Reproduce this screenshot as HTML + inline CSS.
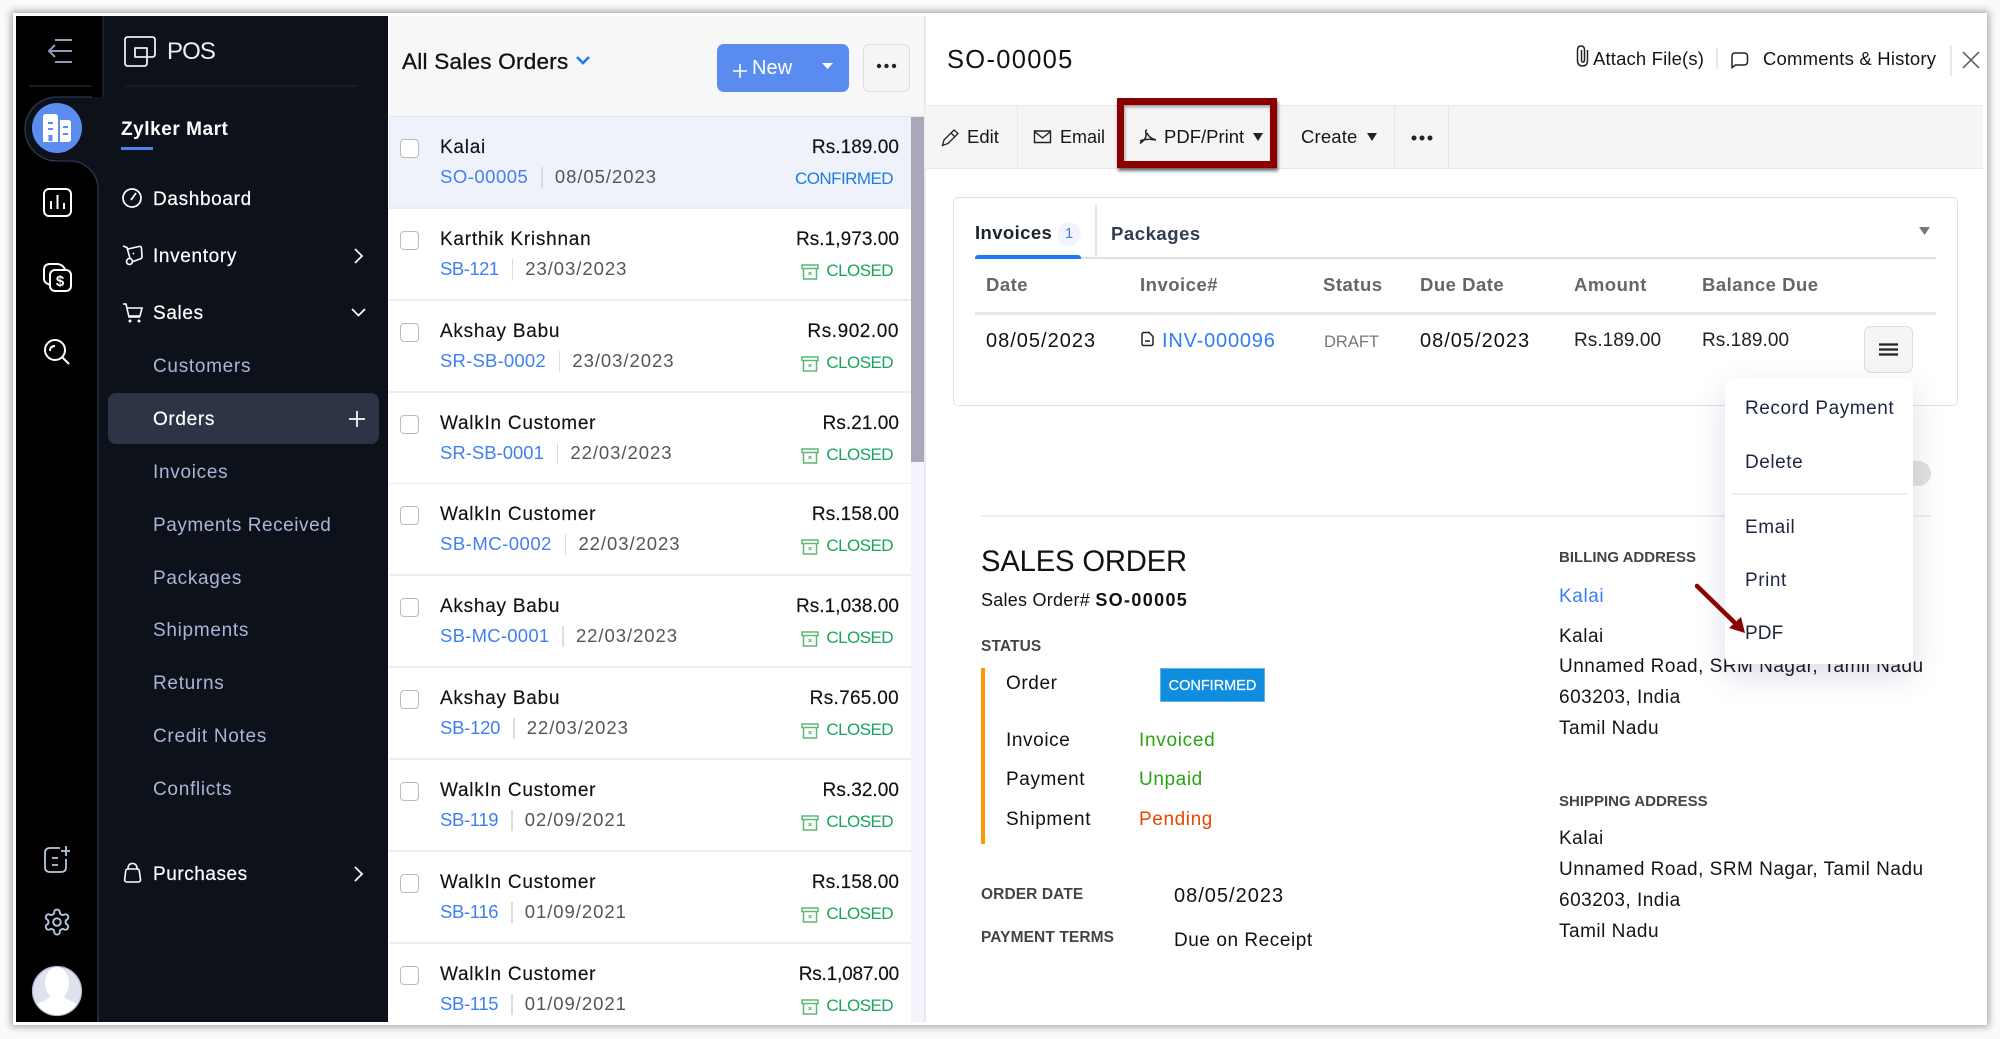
<!DOCTYPE html>
<html lang="en"><head><meta charset="utf-8"><title>Sales Orders</title>
<style>
*{box-sizing:border-box}
html,body{margin:0;padding:0;width:2000px;height:1039px;overflow:hidden;background:#fafafa;font-family:"Liberation Sans",Arial,sans-serif;color:#111}
.a,.t{position:absolute}
.t{white-space:nowrap;height:24px;line-height:24px;font-size:19px;letter-spacing:.6px}
.b{font-weight:700}
#frame{left:13px;top:13px;width:1974px;height:1012px;background:#fff;box-shadow:0 0 7px 2px rgba(0,0,0,.33)}
.nav{color:#fff;letter-spacing:.65px;-webkit-text-stroke:.2px #fff}
.sub{color:#a9b6d6;letter-spacing:.7px}
#list{left:389px;top:117px;width:522px;height:905px;overflow:hidden}
.row{position:absolute;left:0;width:522px;height:92px;border-bottom:2px solid #ecedf3;background:#fff}
.row.sel{background:#f0f2fb}
.cb{position:absolute;left:11px;top:22px;width:19px;height:19px;background:#fff;border:1.5px solid #bbb;border-radius:4px}
.nm{position:absolute;left:51px;top:19px;line-height:24px;font-size:19px;letter-spacing:.75px;white-space:nowrap;-webkit-text-stroke:.15px #111}
.am{position:absolute;right:12px;top:19px;line-height:24px;font-size:19px;white-space:nowrap;letter-spacing:.05px;-webkit-text-stroke:.15px #111}
.sb{position:absolute;left:51px;top:48px;height:24px;display:flex;align-items:center;font-size:18.5px;white-space:nowrap}
.sb u{text-decoration:none;color:#3f7ff5;letter-spacing:.3px}
.sb i{display:block;width:1.5px;height:21px;background:#dcdcdc;margin:0 12px 0 13px}
.sb span{color:#555;letter-spacing:.95px}
.st{position:absolute;right:18px;top:50px;line-height:24px;font-size:17px;white-space:nowrap}
.cf{color:#1c7de0;letter-spacing:-.55px}
.cl{color:#17a45c;letter-spacing:-.55px}
.cl svg{position:absolute;left:-25px;top:5px}
.th{font-weight:700;color:#666;font-size:18.5px;letter-spacing:.5px}
.tool{color:#161616;font-size:18.5px;letter-spacing:0}
.menu{color:#1f2740;letter-spacing:.55px}
.lab{font-weight:700;color:#444;font-size:15.5px;letter-spacing:.1px}
.la2{font-size:15px;letter-spacing:0}
.adr{letter-spacing:.5px;color:#151515}
.dt{font-size:20px;letter-spacing:1px}
</style></head><body>
<div class="a" id="frame"></div>
<div class="a" style="left:16px;top:16px;width:372px;height:1006px;background:#0d1119"></div>
<div class="a" style="left:16px;top:16px;width:87px;height:81px;background:#000"></div>
<div class="a" style="left:16px;top:97px;width:82px;height:925px;background:#000"></div>

<div class="a" style="left:108px;top:393px;width:271px;height:51px;background:#2c3445;border-radius:8px"></div>

<!-- list header -->
<div class="a" style="left:389px;top:16px;width:536px;height:101px;background:#f7f7f7;border-bottom:1.5px solid #e4e4e4"></div>
<div class="a" style="left:717px;top:44px;width:132px;height:48px;background:#5a8cf0;border-radius:7px"></div>
<div class="a" style="left:863px;top:44px;width:47px;height:48px;background:#f5f5f5;border:1.5px solid #ddd;border-radius:7px"></div>

<!-- list -->
<div class="a" id="list">
<div class="row sel" style="top:0"><div class="cb"></div><div class="nm">Kalai</div><div class="am">Rs.189.00</div><div class="sb"><u style="letter-spacing:.5px">SO-00005</u><i></i><span>08/05/2023</span></div><div class="st cf">CONFIRMED</div></div>
<div class="row" style="top:92px"><div class="cb"></div><div class="nm">Karthik Krishnan</div><div class="am">Rs.1,973.00</div><div class="sb"><u style="letter-spacing:-.5px">SB-121</u><i></i><span>23/03/2023</span></div><div class="st cl"><svg width="18" height="16" viewBox="0 0 18 16" fill="none" stroke="#5db874" stroke-width="1.5"><path d="M1 1h16v3.500H1zM2.500 4.500V15h13V4.500"/><path d="M7.500 8l3 3m0-3l-3 3" stroke-width="1"/></svg>CLOSED</div></div>
<div class="row" style="top:184px"><div class="cb"></div><div class="nm">Akshay Babu</div><div class="am" style="letter-spacing:.55px">Rs.902.00</div><div class="sb"><u style="letter-spacing:.2px">SR-SB-0002</u><i></i><span>23/03/2023</span></div><div class="st cl"><svg width="18" height="16" viewBox="0 0 18 16" fill="none" stroke="#5db874" stroke-width="1.5"><path d="M1 1h16v3.500H1zM2.500 4.500V15h13V4.500"/><path d="M7.500 8l3 3m0-3l-3 3" stroke-width="1"/></svg>CLOSED</div></div>
<div class="row" style="top:276px"><div class="cb"></div><div class="nm">WalkIn Customer</div><div class="am">Rs.21.00</div><div class="sb"><u style="letter-spacing:0">SR-SB-0001</u><i></i><span>22/03/2023</span></div><div class="st cl"><svg width="18" height="16" viewBox="0 0 18 16" fill="none" stroke="#5db874" stroke-width="1.5"><path d="M1 1h16v3.500H1zM2.500 4.500V15h13V4.500"/><path d="M7.500 8l3 3m0-3l-3 3" stroke-width="1"/></svg>CLOSED</div></div>
<div class="row" style="top:367px"><div class="cb"></div><div class="nm">WalkIn Customer</div><div class="am">Rs.158.00</div><div class="sb"><u style="letter-spacing:.5px">SB-MC-0002</u><i></i><span>22/03/2023</span></div><div class="st cl"><svg width="18" height="16" viewBox="0 0 18 16" fill="none" stroke="#5db874" stroke-width="1.5"><path d="M1 1h16v3.500H1zM2.500 4.500V15h13V4.500"/><path d="M7.500 8l3 3m0-3l-3 3" stroke-width="1"/></svg>CLOSED</div></div>
<div class="row" style="top:459px"><div class="cb"></div><div class="nm">Akshay Babu</div><div class="am">Rs.1,038.00</div><div class="sb"><u style="letter-spacing:.25px">SB-MC-0001</u><i></i><span>22/03/2023</span></div><div class="st cl"><svg width="18" height="16" viewBox="0 0 18 16" fill="none" stroke="#5db874" stroke-width="1.5"><path d="M1 1h16v3.500H1zM2.500 4.500V15h13V4.500"/><path d="M7.500 8l3 3m0-3l-3 3" stroke-width="1"/></svg>CLOSED</div></div>
<div class="row" style="top:551px"><div class="cb"></div><div class="nm">Akshay Babu</div><div class="am" style="letter-spacing:.3px">Rs.765.00</div><div class="sb"><u style="letter-spacing:-.25px">SB-120</u><i></i><span>22/03/2023</span></div><div class="st cl"><svg width="18" height="16" viewBox="0 0 18 16" fill="none" stroke="#5db874" stroke-width="1.5"><path d="M1 1h16v3.500H1zM2.500 4.500V15h13V4.500"/><path d="M7.500 8l3 3m0-3l-3 3" stroke-width="1"/></svg>CLOSED</div></div>
<div class="row" style="top:643px"><div class="cb"></div><div class="nm">WalkIn Customer</div><div class="am">Rs.32.00</div><div class="sb"><u style="letter-spacing:-.35px">SB-119</u><i></i><span>02/09/2021</span></div><div class="st cl"><svg width="18" height="16" viewBox="0 0 18 16" fill="none" stroke="#5db874" stroke-width="1.5"><path d="M1 1h16v3.500H1zM2.500 4.500V15h13V4.500"/><path d="M7.500 8l3 3m0-3l-3 3" stroke-width="1"/></svg>CLOSED</div></div>
<div class="row" style="top:735px"><div class="cb"></div><div class="nm">WalkIn Customer</div><div class="am">Rs.158.00</div><div class="sb"><u style="letter-spacing:-.35px">SB-116</u><i></i><span>01/09/2021</span></div><div class="st cl"><svg width="18" height="16" viewBox="0 0 18 16" fill="none" stroke="#5db874" stroke-width="1.5"><path d="M1 1h16v3.500H1zM2.500 4.500V15h13V4.500"/><path d="M7.500 8l3 3m0-3l-3 3" stroke-width="1"/></svg>CLOSED</div></div>
<div class="row" style="top:827px"><div class="cb"></div><div class="nm">WalkIn Customer</div><div class="am" style="letter-spacing:-.2px">Rs.1,087.00</div><div class="sb"><u style="letter-spacing:-.35px">SB-115</u><i></i><span>01/09/2021</span></div><div class="st cl"><svg width="18" height="16" viewBox="0 0 18 16" fill="none" stroke="#5db874" stroke-width="1.5"><path d="M1 1h16v3.500H1zM2.500 4.500V15h13V4.500"/><path d="M7.500 8l3 3m0-3l-3 3" stroke-width="1"/></svg>CLOSED</div></div>
</div>
<div class="a" style="left:911px;top:117px;width:13px;height:905px;background:#f3f4fb"></div>
<div class="a" style="left:911px;top:117px;width:13px;height:345px;background:#aaa8b8"></div>
<div class="a" style="left:924px;top:16px;width:1.5px;height:1006px;background:#e8e8ee"></div>

<!-- toolbar -->
<div class="a" style="left:925px;top:105px;width:1058px;height:64px;background:#f5f5f5;border-top:1.5px solid #e9e9e9;border-bottom:1.5px solid #e9e9e9"></div>
<div class="a" style="left:1017px;top:106px;width:1px;height:62px;background:#e6e6e6"></div>
<div class="a" style="left:1394px;top:106px;width:1px;height:62px;background:#e6e6e6"></div>
<div class="a" style="left:1448px;top:106px;width:1px;height:62px;background:#e6e6e6"></div>
<div class="a" style="left:1117px;top:98px;width:160px;height:70px;border:7px solid #8b0000;box-shadow:1px 3px 3px rgba(0,0,0,.55),inset 1px 2px 3px rgba(0,0,0,.35)"></div>

<!-- invoice card -->
<div class="a" style="left:953px;top:197px;width:1005px;height:209px;border:1.5px solid #dfe0e8;border-radius:5px"></div>
<div class="a" style="left:975px;top:257px;width:961px;height:1.5px;background:#dcdde5"></div>
<div class="a" style="left:975px;top:255px;width:106px;height:4px;background:#1f78f2;border-radius:3px 3px 0 0"></div>
<div class="a" style="left:1095px;top:205px;width:1.5px;height:52px;background:#e8e8ee"></div>
<div class="a" style="left:1057px;top:222px;width:24px;height:24px;border-radius:50%;background:#f2f4fd;color:#3f7ff5;font-size:15px;line-height:24px;text-align:center">1</div>
<div class="a" style="left:975px;top:312px;width:961px;height:2.5px;background:#e6e6ee"></div>
<div class="a" style="left:1864px;top:326px;width:49px;height:47px;background:#f5f5f5;border:1.5px solid #ddd;border-radius:7px"></div>

<!-- sales order decoration -->
<div class="a" style="left:1800px;top:461px;width:131px;height:25px;background:#e2e2e2;border-radius:13px"></div>
<div class="a" style="left:980px;top:515px;width:951px;height:1.5px;background:#eeeeee"></div>
<div class="a" style="left:981px;top:668px;width:4px;height:176px;background:#ff9800"></div>
<div class="a" style="left:1160px;top:668px;width:105px;height:34px;background:#0f8ee0;color:#fff;font-size:14.5px;line-height:34px;text-align:center;letter-spacing:0;-webkit-text-stroke:.2px #fff;border:1px solid #5fb4ee">CONFIRMED</div>

<!-- icons -->
<svg class="a" style="left:0;top:0" width="2000" height="1039" viewBox="0 0 2000 1039" fill="none">
<path d="M103 16V97" stroke="#1a2230" stroke-width="1.5"/>
<path d="M29 86H92" stroke="#1c2433" stroke-width="1.5"/>
<path d="M125 86H358" stroke="#1b212d" stroke-width="1.5"/>
<path d="M103 97H57a32 32 0 0 0 0 64H70a28 28 0 0 1 28 28V1022H103Z" fill="#0d1119"/>
<path d="M92 97H57a32 32 0 0 0 0 64H70a28 28 0 0 1 28 28V1022" stroke="#2c3850" stroke-width="1.3"/>
<path d="M55 40H72M49 51H72M55 62H72" stroke="#8f9bb8" stroke-width="2"/>
<path d="M55 45L49 51L55 57" stroke="#8f9bb8" stroke-width="2"/>
<path d="M128 37H152q3 0 3 3V54q0 3-3 3H147V63q0 3-3 3H128q-3 0-3-3V40q0-3 3-3ZM135 48H147V57H135Z" stroke="#eee" stroke-width="1.8" stroke-linejoin="round"/>
<circle cx="57" cy="128" r="25" fill="#5b8def"/>
<path d="M43 117q0-3 3-3h9q3 0 3 3V142H43ZM60 120h8q3 0 3 3V139q0 3-3 3H60Z" fill="#fff"/>
<path d="M48 123h5M48 129h5M63 127h5M63 134h5" stroke="#5b8def" stroke-width="2"/><path d="M48.500 135h4v6h-4z" fill="#5b8def"/>
<rect x="44" y="189" width="27" height="27" rx="5" stroke="#fff" stroke-width="2"/>
<path d="M51 201V209M57.500 195V209M64 203V209" stroke="#fff" stroke-width="2"/>
<rect x="50" y="270" width="21" height="21" rx="5" stroke="#fff" stroke-width="2"/>
<path d="M50 285l-2-1q-4-1.500-4-5V270q0-6 6-6h7q5 0 8 5" stroke="#fff" stroke-width="2"/>
<text x="60" y="286" fill="#fff" font-size="15" font-weight="700" text-anchor="middle" font-family="Liberation Sans">$</text>
<circle cx="55" cy="350" r="10" stroke="#fff" stroke-width="2"/><path d="M62 357L69 364M50 351q0-5 5-5" stroke="#fff" stroke-width="2"/>
<path d="M60 848H50q-5 0-5 5V867q0 5 5 5H61q5 0 5-5V859M52 858H58M52 865H58M66 846V856M61 851H70" stroke="#b9c6e3" stroke-width="1.8"/>
<g transform="translate(42 907) scale(1.25)" stroke="#b9c6e3" stroke-width="1.5"><path d="M12.220 2h-.44a2 2 0 0 0-2 2v.18a2 2 0 0 1-1 1.730l-.43.25a2 2 0 0 1-2 0l-.15-.08a2 2 0 0 0-2.730.73l-.22.38a2 2 0 0 0 .73 2.730l.15.1a2 2 0 0 1 1 1.720v.51a2 2 0 0 1-1 1.740l-.15.09a2 2 0 0 0-.73 2.730l.22.38a2 2 0 0 0 2.730.73l.15-.08a2 2 0 0 1 2 0l.43.25a2 2 0 0 1 1 1.730V20a2 2 0 0 0 2 2h.44a2 2 0 0 0 2-2v-.18a2 2 0 0 1 1-1.730l.43-.25a2 2 0 0 1 2 0l.15.08a2 2 0 0 0 2.730-.73l.22-.39a2 2 0 0 0-.73-2.730l-.15-.08a2 2 0 0 1-1-1.740v-.5a2 2 0 0 1 1-1.740l.15-.09a2 2 0 0 0 .73-2.730l-.22-.38a2 2 0 0 0-2.730-.73l-.15.08a2 2 0 0 1-2 0l-.43-.25a2 2 0 0 1-1-1.730V4a2 2 0 0 0-2-2z"/><circle cx="12" cy="12" r="3"/></g>
<clipPath id="av"><circle cx="57" cy="991" r="24"/></clipPath>
<circle cx="57" cy="991" r="24.500" fill="#dfe2ee" stroke="#aeb6d2" stroke-width="1.200"/>
<g clip-path="url(#av)" fill="#fff"><ellipse cx="57" cy="983" rx="12" ry="16"/><path d="M30 1020q0-16 14-19l6-4h14l6 4q14 3 14 19Z"/></g>
<circle cx="132" cy="198" r="9" stroke="#fff" stroke-width="1.700"/><path d="M131 200L136 193" stroke="#fff" stroke-width="1.700"/>
<path d="M123 246l4 1.500 3 11" stroke="#fff" stroke-width="1.600"/><path d="M128 249l11-2.500q2.500-.5 2.500 2l.5 8q0 2-2 2.500l-7 2.500" stroke="#fff" stroke-width="1.600"/><circle cx="129.500" cy="261.500" r="3" stroke="#fff" stroke-width="1.600"/><path d="M133 253l1 1" stroke="#fff" stroke-width="1.600"/>
<path d="M123 304h3l3 13h11M127 308h15l-2 8h-11" stroke="#fff" stroke-width="1.600"/><circle cx="130" cy="321" r="1.500" fill="#fff"/><circle cx="139" cy="321" r="1.500" fill="#fff"/>
<path d="M128 869h9q2 0 2.300 2l1.200 8.500q.2 2.500-2.300 2.500H127q-2.500 0-2.300-2.500l1-8.500q.3-2 2.300-2ZM128 869q0-5.500 4.500-5.500t4.500 5.500" stroke="#fff" stroke-width="1.600"/><path d="M130 872h.1M135 872h.1" stroke="#fff" stroke-width="1.600"/>
<path d="M355 249l7 7-7 7M355 867l7 7-7 7" stroke="#fff" stroke-width="1.700"/>
<path d="M352 309l6.500 6.500L365 309" stroke="#fff" stroke-width="1.700"/>
<path d="M349 419H365M357 411V427" stroke="#fff" stroke-width="1.700"/>
<path d="M577 57l6 6 6-6" stroke="#1f78f2" stroke-width="2.600"/>
<path d="M733 71H747M740 64V78" stroke="#fff" stroke-width="1.600"/>
<path d="M822 63h11l-5.500 6z" fill="#fff"/>
<circle cx="879" cy="66" r="2.200" fill="#222"/><circle cx="886.500" cy="66" r="2.200" fill="#222"/><circle cx="894" cy="66" r="2.200" fill="#222"/>
<path d="M1587.500 50V60q0 6-5 6t-5-6V50q0-4 3.500-4t3.500 4V60q0 2-1.500 2t-1.500-2V50" stroke="#222" stroke-width="1.500"/>
<path d="M1717 48V69M1951 45V76" stroke="#e0e0e0" stroke-width="1.500"/>
<path d="M1735 53h9q3.500 0 3.500 3.500v5q0 3.500-3.500 3.500h-8.500l-3.500 2.500v-11q0-3.500 3-3.500Z" stroke="#222" stroke-width="1.500"/>
<path d="M1963 52L1979 68M1979 52L1963 68" stroke="#555" stroke-width="1.500"/>
<path d="M954 130l4 3.500-10 10-5.500 2 1.500-5.500ZM951 133l3.500 3.500" stroke="#222" stroke-width="1.300"/>
<path d="M1034.500 131h16v11.500h-16ZM1035 132l7.500 6 7.500-6" stroke="#222" stroke-width="1.400"/>
<path d="M1147 130q-2 0-1 3.500 1 5-6 10M1147 133q2 5 9 7M1140 141q8-3 15-1" stroke="#222" stroke-width="1.500"/>
<path d="M1253 133h10l-5 8zM1367 133h10l-5 8z" fill="#222"/>
<circle cx="1414" cy="138" r="2.500" fill="#222"/><circle cx="1422" cy="138" r="2.500" fill="#222"/><circle cx="1430" cy="138" r="2.500" fill="#222"/>
<path d="M1919 227h11l-5.500 8z" fill="#777"/>
<path d="M1144 332.500h5l4 4v7q0 2-2 2h-7q-2 0-2-2v-9q0-2 2-2ZM1145 341h5" stroke="#222" stroke-width="1.500"/>
<path d="M1879 344.500h19M1879 349.500h19M1879 354.500h19" stroke="#222" stroke-width="2.200"/>
</svg>

<!-- sidebar text -->
<div class="t" style="left:167px;top:40px;font-size:24px;color:#eee;letter-spacing:-.9px">POS</div>
<div class="t b" style="left:121px;top:118px;color:#fff;letter-spacing:.55px">Zylker Mart</div>
<div class="a" style="left:121px;top:147px;width:32px;height:3px;background:#4d86e8"></div>
<div class="t nav" style="left:153px;top:188px">Dashboard</div>
<div class="t nav" style="left:153px;top:245px">Inventory</div>
<div class="t nav" style="left:153px;top:302px">Sales</div>
<div class="t sub" style="left:153px;top:355px">Customers</div>
<div class="t nav" style="left:153px;top:408px">Orders</div>
<div class="t sub" style="left:153px;top:461px">Invoices</div>
<div class="t sub" style="left:153px;top:514px;letter-spacing:.55px">Payments Received</div>
<div class="t sub" style="left:153px;top:567px">Packages</div>
<div class="t sub" style="left:153px;top:619px">Shipments</div>
<div class="t sub" style="left:153px;top:672px">Returns</div>
<div class="t sub" style="left:153px;top:725px">Credit Notes</div>
<div class="t sub" style="left:153px;top:778px">Conflicts</div>
<div class="t nav" style="left:153px;top:863px;letter-spacing:.55px">Purchases</div>

<!-- list header text -->
<div class="t" style="left:402px;top:50px;font-size:22.500px;letter-spacing:.25px;-webkit-text-stroke:.3px #111">All Sales Orders</div>
<div class="t" style="left:752px;top:56px;font-size:20px;color:#fff;letter-spacing:.1px">New</div>

<!-- panel head -->
<div class="t" style="left:947px;top:48px;font-size:25.500px;letter-spacing:1.300px">SO-00005</div>
<div class="t tool" style="left:1593px;top:47px;letter-spacing:.15px">Attach File(s)</div>
<div class="t tool" style="left:1763px;top:47px;letter-spacing:.2px">Comments &amp; History</div>
<div class="t tool" style="left:967px;top:125px">Edit</div>
<div class="t tool" style="left:1060px;top:125px;font-size:18px">Email</div>
<div class="t tool" style="left:1164px;top:125px">PDF/Print</div>
<div class="t tool" style="left:1301px;top:125px;letter-spacing:.15px">Create</div>

<!-- card text -->
<div class="t b" style="left:975px;top:221px;font-size:18.500px;color:#1b2330;letter-spacing:.4px">Invoices</div>
<div class="t b" style="left:1111px;top:222px;font-size:18.500px;color:#333c52;letter-spacing:.55px">Packages</div>
<div class="t th" style="left:986px;top:273px">Date</div>
<div class="t th" style="left:1140px;top:273px">Invoice#</div>
<div class="t th" style="left:1323px;top:273px">Status</div>
<div class="t th" style="left:1420px;top:273px">Due Date</div>
<div class="t th" style="left:1574px;top:273px">Amount</div>
<div class="t th" style="left:1702px;top:273px">Balance Due</div>
<div class="t dt" style="left:986px;top:329px">08/05/2023</div>
<div class="t" style="left:1162px;top:329px;color:#2f7cf6;font-size:20px;letter-spacing:.8px">INV-000096</div>
<div class="t" style="left:1324px;top:330px;color:#777;font-size:16.500px;letter-spacing:0">DRAFT</div>
<div class="t dt" style="left:1420px;top:329px">08/05/2023</div>
<div class="t" style="left:1574px;top:329px;letter-spacing:.05px;color:#222">Rs.189.00</div>
<div class="t" style="left:1702px;top:329px;letter-spacing:.05px;color:#222">Rs.189.00</div>

<!-- sales order text -->
<div class="t" style="left:981px;top:550px;font-size:29.200px;letter-spacing:-.15px">SALES ORDER</div>
<div class="t" style="left:981px;top:588px;font-size:18px;letter-spacing:.25px">Sales Order# <b style="letter-spacing:1.350px">SO-00005</b></div>
<div class="t lab" style="left:981px;top:635px;letter-spacing:.1px">STATUS</div>
<div class="t" style="left:1006px;top:672px">Order</div>
<div class="t" style="left:1006px;top:729px">Invoice</div>
<div class="t" style="left:1139px;top:729px;color:#2aa310;letter-spacing:.7px">Invoiced</div>
<div class="t" style="left:1006px;top:768px">Payment</div>
<div class="t" style="left:1139px;top:768px;color:#2aa310">Unpaid</div>
<div class="t" style="left:1006px;top:808px">Shipment</div>
<div class="t" style="left:1139px;top:808px;color:#ee4400">Pending</div>
<div class="t lab" style="left:981px;top:883px">ORDER DATE</div>
<div class="t dt" style="left:1174px;top:884px">08/05/2023</div>
<div class="t lab" style="left:981px;top:926px">PAYMENT TERMS</div>
<div class="t" style="left:1174px;top:929px;letter-spacing:.55px">Due on Receipt</div>

<div class="t lab la2" style="left:1559px;top:546px">BILLING ADDRESS</div>
<div class="t" style="left:1559px;top:585px;color:#3f7ff5">Kalai</div>
<div class="t adr" style="left:1559px;top:625px">Kalai</div>
<div class="t adr" style="left:1559px;top:655px">Unnamed Road, SRM Nagar, Tamil Nadu</div>
<div class="t adr" style="left:1559px;top:686px">603203, India</div>
<div class="t adr" style="left:1559px;top:717px">Tamil Nadu</div>
<div class="t lab la2" style="left:1559px;top:790px">SHIPPING ADDRESS</div>
<div class="t adr" style="left:1559px;top:827px">Kalai</div>
<div class="t adr" style="left:1559px;top:858px">Unnamed Road, SRM Nagar, Tamil Nadu</div>
<div class="t adr" style="left:1559px;top:889px">603203, India</div>
<div class="t adr" style="left:1559px;top:920px">Tamil Nadu</div>

<!-- dropdown -->
<div class="a" style="left:1725px;top:378px;width:188px;height:286px;background:#fff;border-radius:7px;box-shadow:0 12px 30px rgba(60,70,120,.18)"></div>
<div class="a" style="left:1731px;top:493px;width:177px;height:2px;background:#eeeef5"></div>
<div class="t menu" style="left:1745px;top:397px">Record Payment</div>
<div class="t menu" style="left:1745px;top:451px">Delete</div>
<div class="t menu" style="left:1745px;top:516px">Email</div>
<div class="t menu" style="left:1745px;top:569px">Print</div>
<div class="t menu" style="left:1745px;top:622px;letter-spacing:.1px">PDF</div>

<svg class="a" style="left:1680px;top:570px" width="80" height="80" viewBox="0 0 80 80">
<path d="M17 16L54 52" stroke="#8b0000" stroke-width="4.500" stroke-linecap="round"/>
<path d="M65 63L49 58L61 47Z" fill="#8b0000"/>
</svg>
</body></html>
